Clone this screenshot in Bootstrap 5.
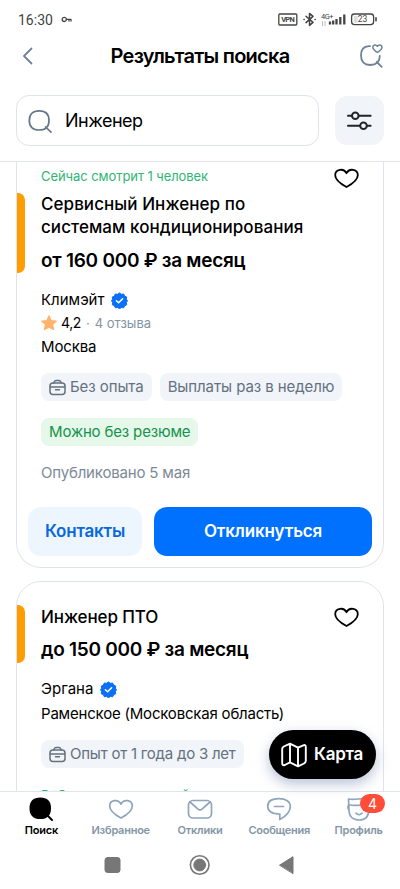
<!DOCTYPE html>
<html lang="ru">
<head>
<meta charset="utf-8">
<meta name="viewport" content="width=device-width, initial-scale=1">
<title>Результаты поиска</title>
<link href="https://cdn.jsdelivr.net/npm/bootstrap@5.3.0/dist/css/bootstrap.min.css" rel="stylesheet">
<style>
body{font-family:Inter,"Noto Sans",sans-serif;color:#000;background:#fff}
.screen{width:400px;height:889px;overflow:hidden}
svg{display:block;flex:none;fill:none;stroke:currentColor;stroke-linecap:round;stroke-linejoin:round}
.statusbar{height:40px;padding:0 22px 0 18px;color:#444;font:14px/40px Roboto,sans-serif}
.titlebar{height:32px;padding:0 17px 0 21px;color:#708296}
.titlebar h1{font-size:20px;line-height:32px;font-weight:600;letter-spacing:-.74px;color:#000}
.searchrow{height:90px;padding:23px 16px 0;border-bottom:1px solid #e3e7ed}
.searchbox{width:303px;height:51px;border:1px solid #dde4ec;border-radius:13px;padding-left:10px;font-size:18px;letter-spacing:-.5px}
.searchbox svg{color:#66788a}
.filterbtn{width:49px;height:49px;border-radius:12px;background:#f1f4f9;margin-top:1px}
.feed{height:629px;padding:0 16px}
.vacancy{border:1px solid #dfe4ec;border-radius:25px;padding:0 11px;width:368px}
.vacancy.cut{border-top:0;border-top-left-radius:0;border-top-right-radius:0;height:406px;padding-top:1px}
.vacancy.next{margin-top:13px;height:300px}
.body-pad{padding-left:13px}
.stripe{left:0;width:8px;background:#ff9d00;border-radius:0 7px 7px 0}
.like{right:24px}
.viewing{font-size:13px;line-height:27px;color:#2fb574;letter-spacing:-.07px}
.vtitle{font-size:17px;line-height:23px;font-weight:500;letter-spacing:.06px}
.pay{font-size:19px;line-height:28px;font-weight:600;letter-spacing:-.27px}
.info{font-size:15px;line-height:24px}
.rating{font-size:13px;line-height:22px;color:#8493a3}
.rating b{font-weight:400;font-size:14px;color:#000;letter-spacing:-.4px}
.chip{height:28px;border-radius:8px;background:#f1f4f9;color:#64717f;font-size:15px;line-height:28px;padding:0 8px;white-space:nowrap}
.chip svg{margin-right:4px}
.chip.ok{background:#e6f8ea;color:#14924c;letter-spacing:-.16px}
.muted{color:#7d8997;letter-spacing:-.18px}
.act{height:49px;border-radius:13px;border:0;font-size:17px;font-weight:600;padding:0;letter-spacing:-.18px}
.act.soft{width:114px;background:#edf6ff;color:#0a68dc}
.act.main{width:218px;background:#0070ff;color:#fff}
.mapbtn{right:24px;top:730px;width:107px;height:49px;border-radius:25px;background:#000;color:#fff;font-size:17px;font-weight:600;letter-spacing:-.25px;box-shadow:0 5px 13px rgba(80,105,155,.4)}
.tabs{height:51px;border-top:1px solid #e0e5ea;background:#fff;color:#8fa2b5}
.tabs a{width:79.3px;color:#8496a6;font-size:11px;font-weight:600;line-height:14px;padding-top:4px;text-decoration:none;letter-spacing:-.25px}
.tabs svg{color:#8fa5bc;margin-bottom:1px}
.tabs a.on,.tabs a.on svg{color:#000}
.bubble{left:41px;top:2px;width:25px;height:19px;border-radius:10px;background:#ff4d3a;color:#fff;font:14px/19px Inter,sans-serif}
.sysbar{height:47px;color:#777}
</style>
</head>
<body>
<div class="screen position-relative">
<header class="bg-white">
  <div class="statusbar d-flex align-items-center">
    <span>16:30</span>
    <svg class="ms-2" width="11" height="10" viewBox="0 0 11 10" stroke-width="1.3"><circle cx="3.3" cy="4.4" r="2.1"/><path d="M5.5 4.4H10V6M8 4.4V6"/></svg>
    <div class="d-flex align-items-center ms-auto">
      <svg width="100" height="20" viewBox="278 10 100 20" stroke-width="1.3">
        <rect x="278.8" y="14" width="18" height="11" rx="1"/>
        <text x="281.2" y="22.3" font-family="Roboto,sans-serif" font-size="7.5" font-weight="700" fill="currentColor" stroke="none" textLength="13.5">VPN</text>
        <path d="M306 16.2L313 22.4L309.5 25.4V13.4L313 16.4L306 22.6M304 19.4h.2M315 19.4h.2" stroke-width="1.5"/>
        <text x="321" y="18.6" font-family="Roboto,sans-serif" font-size="7.5" fill="currentColor" stroke="none" textLength="12.5">4G+</text>
        <path d="M322.5 21.5v4M325 21.5v4" stroke="#aaa" stroke-width=".8"/>
        <path d="M330 21.5v3M333.2 20.5v4M336.500 19v5.500M340.3 17v7.500M344.3 14.500v10" stroke-width="2.3" stroke-linecap="butt"/>
        <rect x="351.6" y="14" width="22" height="10.6" rx="2.8"/><path d="M376 17.8v3" stroke-width="1.6"/>
        <rect x="353.7" y="16" width="4" height="6.7" fill="#ddd" stroke="none"/>
        <text x="362.6" y="22.4" text-anchor="middle" font-family="Roboto,sans-serif" font-size="8.5" fill="currentColor" stroke="none">23</text>
      </svg>
    </div>
  </div>
  <div class="titlebar d-flex align-items-center justify-content-between">
    <svg width="13" height="18" viewBox="0 0 13 18" stroke-width="1.8"><path d="M10.5 1.5L3 9L10.5 16.5"/></svg>
    <h1 class="m-0 ps-2">Результаты поиска</h1>
    <svg width="25" height="26" viewBox="0 0 25 26" stroke-width="1.8" stroke-linecap="butt"><path d="M12 3.2H10.8C5.4 3.5 3 7 3 12.3C3 19 6.5 22 12.2 22C18.3 22 21.8 18.6 21.8 12.8M18.7 19L23.7 23.8"/><path d="M19.4 9.4C16.8 7.6 14.8 6.2 14.8 4.2C14.8 1.5 18.2 1.2 19.4 3.4C20.6 1.2 24 1.5 24 4.2C24 6.2 22 7.6 19.4 9.4Z" stroke-width="1.5"/></svg>
  </div>
  <div class="searchrow d-flex justify-content-between">
    <div class="searchbox d-flex align-items-center">
      <svg width="26" height="26" viewBox="0 0 26 26" stroke-width="1.7" stroke-linecap="butt"><path d="M12.2 2.8C18.6 2.8 22 6.1 22 12.4S18.6 22 12.2 22S2.3 18.7 2.3 12.4S5.8 2.8 12.2 2.8ZM18.6 19L24 24.2"/></svg>
      <span class="ms-2 ps-1">Инженер</span>
    </div>
    <button class="btn filterbtn d-flex align-items-center justify-content-center p-0 border-0">
      <svg width="26" height="24" viewBox="0.700 0.500 26 24" stroke="#000" stroke-width="2" stroke-linecap="butt"><path d="M1.7 7.3H5.5M12.5 7.3H24.3M1.7 17.3H13.5M20.7 17.3H24.3"/><circle cx="9" cy="7.3" r="3.3"/><circle cx="17.2" cy="17.3" r="3.3"/></svg>
    </button>
  </div>
</header>
<main class="feed overflow-hidden">
  <article class="vacancy cut position-relative">
    <span class="stripe position-absolute" style="top:31px;height:80px"></span>
    <svg class="like position-absolute" style="top:6px" width="25" height="21" viewBox="0 0 25 21" stroke-width="1.8"><path d="M12.5 19C6.5 15.7 1.2 12.3 1.2 7.2C1.2 1.2 9.7-.3 12.5 5.2C15.3-.3 23.8 1.2 23.8 7.2C23.8 12.3 18.5 15.7 12.5 19Z"/></svg>
    <div class="body-pad">
      <div class="viewing">Сейчас смотрит 1 человек</div>
      <h2 class="vtitle m-0" style="padding-top:3px">Сервисный Инженер по<br>системам кондиционирования</h2>
      <div class="pay" style="margin-top:8px">от 160 000 ₽ за месяц</div>
      <div class="info d-flex align-items-center" style="margin-top:13px">Климэйт
        <svg style="margin-left:7px" width="17" height="17" viewBox="0 0 17 17"><path d="M8.5 1l1.9 1.3 2.3-.3.9 2.1 2.1.9-.3 2.2 1.1 1.6-1.1 1.8.3 2.2-2.1.9-.9 2.1-2.3-.3-1.9 1.3-1.9-1.3-2.3.3-.9-2.1-2.1-.9.3-2.2L.5 8.800l1.100-1.600-.3-2.200 2.100-.9.9-2.100 2.300.3Z" fill="#0a70f5" stroke="#0a70f5"/><path d="M5.400 8.700l2.200 2.100 4-4.100" stroke="#fff" stroke-width="1.500"/></svg></div>
      <div class="rating d-flex align-items-center"><svg width="16" height="16" viewBox="0 0 16 16"><path d="M8 1.200l2 4.500 5 .5-3.700 3.200 1.100 4.900L8 11.800l-4.400 2.500 1.100-4.900L1 6.200l5-.5Z" fill="#ffb36b" stroke="#ffb36b" stroke-width="1.600"/></svg><b class="ms-1">4,2</b><span style="margin:0 5px 0 5px">·</span>4 отзыва</div>
      <div class="info" style="letter-spacing:-.15px;margin-top:1px">Москва</div>
      <div class="d-flex gap-2" style="margin-top:14px">
        <span class="chip d-flex align-items-center" style="letter-spacing:-.08px"><svg width="17" height="17" viewBox="0 0 17 17" stroke-width="1.500"><rect x="1" y="4" width="15" height="11.500" rx="3"/><path d="M4.700 4C5.200 2.200 5.700 1.500 7 1.500H10C11.300 1.500 11.800 2.200 12.300 4M1.200 8H15.800M6.500 10.700H10.500"/></svg>Без опыта</span>
        <span class="chip" style="letter-spacing:-.08px">Выплаты раз в неделю</span>
      </div>
      <div class="d-flex" style="margin-top:17px"><span class="chip ok">Можно без резюме</span></div>
      <div class="info muted" style="margin-top:15px">Опубликовано 5 мая</div>
    </div>
    <div class="d-flex justify-content-between" style="margin-top:22px">
      <button class="btn act soft">Контакты</button>
      <button class="btn act main">Откликнуться</button>
    </div>
  </article>
  <article class="vacancy next position-relative">
    <span class="stripe position-absolute" style="top:23px;height:58px"></span>
    <svg class="like position-absolute" style="top:25px" width="25" height="21" viewBox="0 0 25 21" stroke-width="1.800"><path d="M12.500 19C6.500 15.700 1.200 12.300 1.200 7.200C1.200 1.200 9.700-.3 12.500 5.200C15.300-.3 23.800 1.200 23.800 7.200C23.800 12.300 18.500 15.700 12.500 19Z"/></svg>
    <div class="body-pad">
      <h2 class="vtitle m-0" style="padding-top:24px;letter-spacing:-.1px">Инженер ПТО</h2>
      <div class="pay" style="margin-top:7px">до 150 000 ₽ за месяц</div>
      <div class="info d-flex align-items-center" style="margin-top:13px">Эргана
        <svg style="margin-left:7px" width="17" height="17" viewBox="0 0 17 17"><path d="M8.500 1l1.900 1.300 2.300-.3.9 2.100 2.100.9-.3 2.200 1.100 1.600-1.100 1.800.3 2.200-2.100.9-.9 2.100-2.300-.3-1.900 1.300-1.900-1.300-2.300.3-.9-2.100-2.100-.9.3-2.200L.5 8.800l1.100-1.600-.3-2.200 2.100-.9.9-2.100 2.300.3Z" fill="#0a70f5" stroke="#0a70f5"/><path d="M5.400 8.700l2.200 2.100 4-4.100" stroke="#fff" stroke-width="1.500"/></svg></div>
      <div class="info" style="letter-spacing:-.2px;padding-top:1px">Раменское (Московская область)</div>
      <div class="d-flex" style="margin-top:14px">
        <span class="chip d-flex align-items-center" style="letter-spacing:-.23px"><svg width="17" height="17" viewBox="0 0 17 17" stroke-width="1.500"><rect x="1" y="4" width="15" height="11.500" rx="3"/><path d="M4.700 4C5.200 2.200 5.700 1.500 7 1.500H10C11.300 1.500 11.800 2.200 12.300 4M1.200 8H15.800M6.500 10.700H10.500"/></svg>Опыт от 1 года до 3 лет</span>
      </div>
      <div class="viewing" style="margin-top:14px;letter-spacing:.45px">Работает с вакансией</div>
    </div>
  </article>
</main>
<button class="btn mapbtn position-absolute d-flex align-items-center p-0 border-0">
  <svg style="margin:0 7px 0 12px" width="26" height="26" viewBox="0 0 26 26" stroke-width="1.900"><path d="M9 1.600L2.800 4.500Q1.200 5.300 1.200 7V21Q1.200 24 3.800 23L9 20.400L17 24.400L23 21.500Q24.800 20.600 24.800 18.800V5Q24.800 2.200 22.300 3.300L17 5.600ZM9 1.600V20.400M17 5.600V24.400"/></svg>Карта
</button>
<nav class="tabs d-flex justify-content-center text-center">
  <a class="on" href="#"><svg class="mx-auto" width="26" height="26" viewBox="0 0 26 26" stroke-width="2" stroke-linecap="butt"><path d="M12.300 2.500C18.600 2.500 22 5.800 22 12.200S18.600 22 12.300 22S2.500 18.600 2.500 12.200S6 2.500 12.300 2.500Z" fill="currentColor"/><path d="M18 18L24 24"/></svg>Поиск</a>
  <a href="#"><svg class="mx-auto" width="26" height="26" viewBox="0 0 26 26" stroke-width="1.700"><path d="M13 22C7 18.700 1.700 15 1.700 9.900C1.700 4 10.200 2.500 13 8C15.800 2.500 24.300 4 24.300 9.900C24.300 15 19 18.700 13 22Z"/></svg>Избранное</a>
  <a href="#"><svg class="mx-auto" width="26" height="26" viewBox="0 0 26 26" stroke-width="1.700"><rect x="1.500" y="4.500" width="23" height="17.500" rx="4.500"/><path d="M3 6L11 13.200Q13 14.800 15 13.200L23 6"/></svg>Отклики</a>
  <a href="#"><svg class="mx-auto" width="26" height="26" viewBox="0 0 26 26" stroke-width="1.700"><path d="M13 2.700C20 2.700 24.300 5.500 24.300 10.300C24.300 16 19.500 20.500 13.800 23.600V18C6 18 1.700 15.200 1.700 10.300C1.700 5.500 6 2.700 13 2.700ZM8.500 10.500H17.500"/></svg>Сообщения</a>
  <a class="position-relative" href="#"><svg class="mx-auto" width="26" height="26" viewBox="0 0 26 26" stroke-width="1.700"><path d="M2.500 3C9 4.500 15 1.500 23 3V13C23 20.500 19 24 13 24S3 20.500 3 14ZM2.500 3L3 14C1.500 12 1.500 9.500 3.200 8.800C9 10.500 15 8.500 22.500 8.500M10 17.200Q13 20.300 16 17.200"/></svg>Профиль<span class="bubble position-absolute">4</span></a>
</nav>
<footer class="sysbar d-flex justify-content-center">
  <svg width="200" height="47" viewBox="100 842 200 47" stroke="none"><rect x="105" y="857.500" width="15" height="15" rx="2.500" fill="currentColor"/><circle cx="199.700" cy="865" r="9.300" stroke="currentColor" stroke-width="1.600"/><circle cx="199.700" cy="865" r="5.900" fill="currentColor"/><path d="M279.800 865L293 856.700V873.300Z" fill="currentColor"/></svg>
</footer>
</div>
<script src="https://cdn.jsdelivr.net/npm/bootstrap@5.3.0/dist/js/bootstrap.bundle.min.js"></script>
</body>
</html>
